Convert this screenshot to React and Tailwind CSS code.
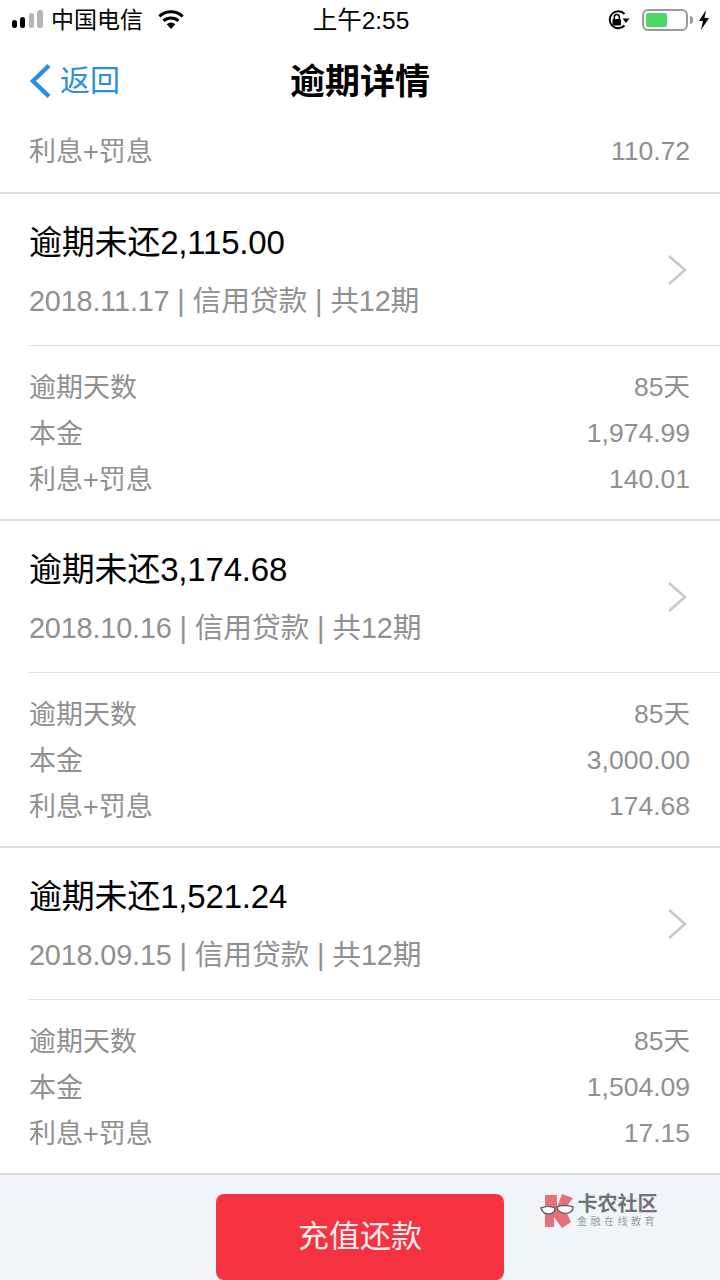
import React from "react";

const font = "font-['Liberation_Sans','Noto_Sans_CJK_SC',sans-serif]";

const loans = [
  { title: "逾期未还2,115.00", date: "2018.11.17", principal: "1,974.99", interest: "140.01" },
  { title: "逾期未还3,174.68", date: "2018.10.16", principal: "3,000.00", interest: "174.68" },
  { title: "逾期未还1,521.24", date: "2018.09.15", principal: "1,504.09", interest: "17.15" },
];

const Row = ({ label, value }) => (
  <div className="flex h-[46px] items-center justify-between text-[#909090]">
    <span className="text-[27px]">{label}</span>
    <span className="text-[26.5px]">{value}</span>
  </div>
);

const StatusBar = () => (
  <div className="flex h-[40px] items-center justify-between pl-[12px] pr-[10px] text-black">
    <div className="flex w-[240px] items-center">
      <svg width="32" height="20" viewBox="0 0 32 20">
        <rect x="0" y="10" width="5" height="8" rx="2.5" fill="#000" />
        <rect x="8" y="7" width="5" height="11" rx="2.5" fill="#000" />
        <rect x="17" y="3" width="5" height="15" rx="2.5" fill="#b5b5b5" />
        <rect x="25" y="0" width="6" height="18" rx="2.5" fill="#b5b5b5" />
      </svg>
      <span className="ml-[7px] text-[23px] leading-none">中国电信</span>
      <svg className="ml-[14px]" width="28" height="22" viewBox="0 0 28 22">
        <path d="M14 20l-4.300-4.800a6.200 6.200 0 0 1 8.600 0z" fill="#000" />
        <path d="M7.500 13a9.500 9.500 0 0 1 13 0l2-2.200a12.500 12.500 0 0 0-17 0z" fill="#000" />
        <path d="M3.300 8.500a15.500 15.500 0 0 1 21.400 0l2-2.200a18.500 18.500 0 0 0-25.400 0z" fill="#000" />
      </svg>
    </div>
    <span className="pt-[2px] text-[24.5px] leading-none">上午2:55</span>
    <div className="flex w-[240px] items-center justify-end">
      <svg width="24" height="22" viewBox="0 0 24 22">
        <path d="M17.500 16.500A8.500 8.500 0 1 1 17.500 5" fill="none" stroke="#000" strokeWidth="2" />
        <path d="M15.500 9.500h7l-3.500 4.500z" fill="#000" />
        <rect x="5.500" y="10" width="8.500" height="6.500" rx="1" fill="#000" />
        <path d="M7.300 10V8a2.500 2.500 0 0 1 5 0v2" fill="none" stroke="#000" strokeWidth="1.500" />
      </svg>
      <div className="ml-[11px] flex h-[22px] w-[46px] items-center rounded-[6px] border-2 border-[#9a9a9a] p-[2px]">
        <div className="h-full w-[21px] rounded-[2px] bg-[#4cd964]" />
      </div>
      <div className="ml-[2px] h-[8px] w-[3px] rounded-r-full bg-[#9a9a9a]" />
      <svg className="ml-[5px]" width="12" height="20" viewBox="0 0 12 20">
        <path d="M8 0L1 11h4l-2 9 8-12H6.500z" fill="#000" />
      </svg>
    </div>
  </div>
);

const LoanCard = ({ loan }) => (
  <section className="h-[327px] border-b-2 border-[#dcdcdc] pl-[29px]">
    <div className="relative h-[152px] border-b border-[#e2e2e2]">
      <h2 className="pt-[29px] text-[33px] leading-[40px] tracking-[-0.2px] text-black">{loan.title}</h2>
      <p className="mt-[18px] text-[28.8px] leading-[40px] tracking-[-0.15px] text-[#909090]">
        {loan.date} | 信用贷款 | 共12期
      </p>
      <svg className="absolute right-[32px] top-[60px]" width="21" height="32" viewBox="0 0 21 32">
        <path d="M2 2L18 16 2 30" fill="none" stroke="#c8c8c8" strokeWidth="2.500" />
      </svg>
    </div>
    <div className="pr-[30px] pt-[19px]">
      <Row label="逾期天数" value="85天" />
      <Row label="本金" value={loan.principal} />
      <Row label="利息+罚息" value={loan.interest} />
    </div>
  </section>
);

const Watermark = () => (
  <div className="absolute left-[540px] top-[18px] flex items-start">
    <svg width="36" height="36" viewBox="0 0 36 36">
      <path d="M5 2h12v12L22 1l11 4-8 11 6 13-9 6-8-11v10H5z" fill="#e8707a" />
      <path d="M1 15c4-2 10-2 14 0 1 7-12 9-14 0zM17 14c4-2 12-2 16 0 1 8-15 9-16 0z" fill="#fff" stroke="#666" strokeWidth="1.500" />
    </svg>
    <div className="ml-[1px] flex flex-col items-center">
      <span className="text-[20px] font-bold leading-[22px] text-[#6f7378]">卡农社区</span>
      <span className="text-[10px] leading-[14px] tracking-[3.5px] text-[#9a9da1]">金融在线教育</span>
    </div>
  </div>
);

const App = () => {
  return (
    <div className={`flex h-[1280px] w-[720px] flex-col overflow-hidden bg-white ${font}`}>
      <StatusBar />
      <header className="relative flex h-[82px] items-center justify-center">
        <div className="absolute left-[28px] top-[23px] flex items-center text-[#2a90dc]">
          <svg width="24" height="36" viewBox="0 0 24 36">
            <path d="M21 2.500L5 18l16 15.500" fill="none" stroke="#2a90dc" strokeWidth="4.500" />
          </svg>
          <span className="ml-[8px] text-[30px] leading-none">返回</span>
        </div>
        <h1 className="text-[35px] font-bold leading-none text-black">逾期详情</h1>
      </header>
      <div className="flex h-[72px] items-center justify-between border-b-2 border-[#dcdcdc] pb-[10px] pl-[29px] pr-[30px] text-[#909090]">
        <span className="text-[27px]">利息+罚息</span>
        <span className="text-[26.5px]">110.72</span>
      </div>
      {loans.map((loan, idx) => (
        <LoanCard key={idx} loan={loan} />
      ))}
      <footer className="relative flex-1 bg-[#f1f4f9] pl-[216px] pt-[19px]">
        <div className="flex h-[86px] w-[288px] items-center justify-center rounded-[8px] bg-[#f53340] text-[31px] text-[#fdeced]">
          充值还款
        </div>
        <Watermark />
      </footer>
    </div>
  );
};

export default App;
